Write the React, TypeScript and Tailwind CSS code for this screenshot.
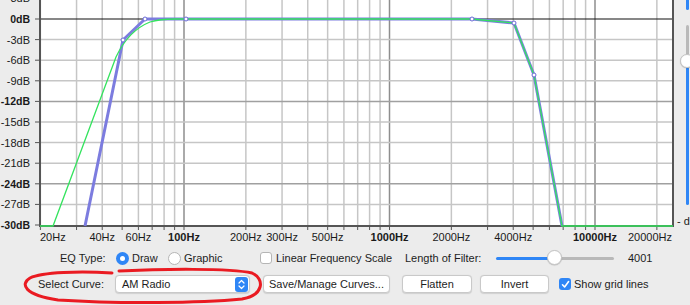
import React from "react";

// log frequency axis: 100Hz at x=184, one decade = 205.5px
const fx = (f: number) => 184 + 205.5 * Math.log10(f / 100);
// dB axis: 0dB at y=19, 6.867px per dB
const dy = (db: number) => 19 - db * 6.867;

const gridFreqs = [
  20, 30, 40, 50, 60, 70, 80, 90, 100, 200, 300, 400, 500, 600, 700, 800, 900,
  1000, 2000, 3000, 4000, 5000, 6000, 7000, 8000, 9000, 10000, 20000,
];
const decades = [100, 1000, 10000];
const dbLines = [3, 0, -3, -6, -9, -12, -15, -18, -21, -24, -27, -30];
const boldDb = [0, -12, -24, -30];

const freqLabels: Array<{ f: number; text: string; bold?: boolean; anchor?: "start" | "middle" | "end"; x?: number }> = [
  { f: 20, text: "20Hz", anchor: "start", x: 40 },
  { f: 40, text: "40Hz" },
  { f: 60, text: "60Hz" },
  { f: 100, text: "100Hz", bold: true },
  { f: 200, text: "200Hz" },
  { f: 300, text: "300Hz" },
  { f: 500, text: "500Hz" },
  { f: 1000, text: "1000Hz", bold: true },
  { f: 2000, text: "2000Hz" },
  { f: 4000, text: "4000Hz" },
  { f: 10000, text: "10000Hz", bold: true },
  { f: 20000, text: "20000Hz", anchor: "end", x: 672 },
];

const curvePoints: Array<[number, number]> = [
  [85, 226],
  [123, 40],
  [145, 19],
  [186, 19],
  [472, 19],
  [514, 23],
  [534, 75],
  [562, 226],
];

function EqChart() {
  const blue = curvePoints.map((p) => p.join(",")).join(" ");
  return (
    <svg width={676} height={245} className="block shrink-0">
      <rect x={41} y={0} width={631} height={225} fill="#ffffff" />

      {gridFreqs.map((f) => (
        <line
          key={`v${f}`}
          x1={fx(f)}
          x2={fx(f)}
          y1={0}
          y2={226}
          stroke={decades.includes(f) ? "#8e8e8e" : "#c6c6c6"}
          strokeWidth={1.5}
        />
      ))}

      {dbLines
        .filter((d) => d !== 0 && d !== -30)
        .map((d) => (
          <line
            key={`h${d}`}
            x1={41}
            x2={672}
            y1={dy(d)}
            y2={dy(d)}
            stroke={d === -12 || d === -24 ? "#a0a0a0" : "#c6c6c6"}
            strokeWidth={1.5}
          />
        ))}
      <line x1={41} x2={672} y1={dy(0)} y2={dy(0)} stroke="#111" strokeWidth={1.2} />

      {/* axes */}
      <line x1={40} x2={40} y1={0} y2={227} stroke="#555" strokeWidth={2} />
      <line x1={39} x2={674} y1={226} y2={226} stroke="#555" strokeWidth={2} />
      <line x1={673} x2={673} y1={0} y2={227} stroke="#555" strokeWidth={2} />

      {dbLines.map((d) => (
        <line key={`lt${d}`} x1={35} x2={40} y1={dy(d)} y2={dy(d)} stroke="#555" strokeWidth={1} />
      ))}
      {gridFreqs.map((f) => (
        <line key={`bt${f}`} x1={fx(f)} x2={fx(f)} y1={226} y2={230} stroke="#555" strokeWidth={1} />
      ))}

      {/* curves */}
      <polyline points={blue} fill="none" stroke="#7c7cdf" strokeWidth={3} strokeLinejoin="round" />
      <path
        d="M40 226 L53 226 L116 57 C124 40 135 28 150 22 C158 19.5 165 19 175 19 L472 19 L514 23 L534 75 L562 226 L673 226"
        fill="none"
        stroke="#34e35e"
        strokeWidth={1.3}
      />
      {curvePoints.slice(1, -1).map(([x, y]) => (
        <circle key={`p${x}`} cx={x} cy={y} r={2} fill="#fff" stroke="#6a6ad6" strokeWidth={1} />
      ))}

      {/* labels */}
      <g fontFamily="'Liberation Sans', Arial, sans-serif" fontSize={11} fill="#1a1a1a">
        {dbLines.map((d) => (
          <text
            key={`dl${d}`}
            x={30}
            y={dy(d) + 4}
            textAnchor="end"
            fontWeight={boldDb.includes(d) ? 700 : 400}
            fontSize={boldDb.includes(d) ? 10.5 : 11}
          >
            {`${d}dB`}
          </text>
        ))}
        {freqLabels.map((l) => (
          <text
            key={l.text}
            x={l.x ?? fx(l.f)}
            y={241}
            textAnchor={l.anchor ?? "middle"}
            fontWeight={l.bold ? 700 : 400}
          >
            {l.text}
          </text>
        ))}
      </g>
    </svg>
  );
}

function Radio({ checked }: { checked?: boolean }) {
  return checked ? (
    <span className="flex h-[13px] w-[13px] shrink-0 items-center justify-center rounded-full bg-[#2f86f6]">
      <span className="h-[5px] w-[5px] rounded-full bg-white" />
    </span>
  ) : (
    <span className="h-[13px] w-[13px] shrink-0 rounded-full border border-[#b5b5b5] bg-white" />
  );
}

function Checkbox({ checked }: { checked?: boolean }) {
  return checked ? (
    <span className="flex h-[12px] w-[12px] shrink-0 items-center justify-center rounded-[3px] bg-[#2f86f6]">
      <svg width="9" height="9" viewBox="0 0 9 9">
        <path d="M1.5 4.8 L3.6 7 L7.6 1.6" fill="none" stroke="#fff" strokeWidth="1.6" strokeLinecap="round" strokeLinejoin="round" />
      </svg>
    </span>
  ) : (
    <span className="h-[12px] w-[12px] shrink-0 rounded-[3px] border border-[#b5b5b5] bg-white" />
  );
}

function Button({ label, width }: { label: string; width: string }) {
  return (
    <div
      className={`${width} flex h-[18px] shrink-0 items-center justify-center rounded-[4px] border border-[#c9c9c9] bg-white shadow-[0_0.5px_1px_rgba(0,0,0,0.12)]`}
    >
      {label}
    </div>
  );
}

export default function App() {
  return (
    <div className="relative h-[305px] w-[690px] overflow-hidden bg-[#ececec] font-['Liberation_Sans',Arial,sans-serif] text-[11px] text-[#1d1d1d]">
      <div className="flex h-[245px]">
        <EqChart />
        <div className="relative w-[14px] overflow-hidden">
          <div className="absolute left-[10px] top-0 h-[10px] w-[3px] rounded-b bg-[#2f86f6]" />
          <div className="absolute left-[10px] top-[25px] h-[30px] w-[3px] rounded bg-[#b9b9b9]" />
          <div className="absolute left-[10px] top-[67px] h-[138px] w-[3px] rounded bg-[#2f86f6]" />
          <div className="absolute left-[4px] top-[54px] h-[14px] w-[14px] rounded-full border border-[#c4c4c4] bg-white shadow-[0_0.5px_1px_rgba(0,0,0,0.2)]" />
          <div className="absolute left-[1px] top-[213px] whitespace-nowrap">- d</div>
        </div>
      </div>

      <div className="mt-[3px] flex h-[20px] items-center pl-[60px]">
        <span className="w-[56px] shrink-0">EQ Type:</span>
        <Radio checked />
        <span className="ml-[3px] w-[36px] shrink-0">Draw</span>
        <Radio />
        <span className="ml-[3px] w-[76px] shrink-0">Graphic</span>
        <Checkbox />
        <span className="ml-[4px] w-[129px] shrink-0 whitespace-nowrap">Linear Frequency Scale</span>
        <span className="w-[91px] shrink-0 whitespace-nowrap">Length of Filter:</span>
        <div className="relative flex h-[16px] w-[118px] shrink-0 items-center">
          <div className="h-[3px] w-[58px] rounded-l bg-[#2f86f6]" />
          <div className="h-[3px] flex-1 rounded-r bg-[#b9b9b9]" />
          <div className="absolute left-[51px] top-[0px] h-[15px] w-[15px] rounded-full border border-[#c4c4c4] bg-white shadow-[0_0.5px_1px_rgba(0,0,0,0.2)]" />
        </div>
        <span className="ml-[14px]">4001</span>
      </div>

      <div className="mt-[7px] flex h-[18px] items-center pl-[38px]">
        <span className="w-[77px] shrink-0 whitespace-nowrap">Select Curve:</span>
        <div className="flex h-[18px] w-[135px] shrink-0 items-center rounded-[4px] border border-[#c9c9c9] bg-white pl-[6px] shadow-[0_0.5px_1px_rgba(0,0,0,0.12)]">
          <span className="flex-1">AM Radio</span>
          <span className="mr-[1px] flex h-[15px] w-[13px] items-center justify-center rounded-[3px] bg-[#2f86f6]">
            <svg width="7" height="11" viewBox="0 0 7 11">
              <path d="M1 4 L3.5 1.5 L6 4 M1 7 L3.5 9.5 L6 7" fill="none" stroke="#fff" strokeWidth="1.2" strokeLinecap="round" strokeLinejoin="round" />
            </svg>
          </span>
        </div>
        <div className="ml-[13px]">
          <Button label="Save/Manage Curves..." width="w-[127px]" />
        </div>
        <div className="ml-[12px]">
          <Button label="Flatten" width="w-[70px]" />
        </div>
        <div className="ml-[8px]">
          <Button label="Invert" width="w-[69px]" />
        </div>
        <span className="ml-[10px]">
          <Checkbox checked />
        </span>
        <span className="ml-[3px] whitespace-nowrap">Show grid lines</span>
      </div>

      {/* hand-drawn red annotation */}
      <svg className="pointer-events-none absolute left-0 top-0" width={690} height={305}>
        <path
          d="M112 273 C80 271 42 272 30 278 C20 284 24 295 58 300 C120 304 200 303 242 299 C264 295 265 279 252 273 C230 268 160 269 119 271"
          fill="none"
          stroke="#ea1b22"
          strokeWidth={3}
          strokeLinecap="round"
        />
      </svg>
    </div>
  );
}
